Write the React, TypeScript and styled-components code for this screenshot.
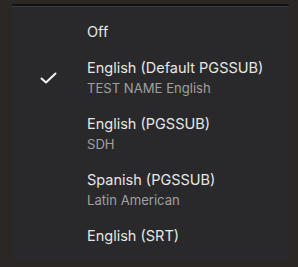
import React from "react";
import styled, { createGlobalStyle } from "styled-components";

const Global = createGlobalStyle`
  html, body { margin: 0; padding: 0; background: #2a2724; }
  body { font-family: Inter, "Noto Sans", sans-serif; -webkit-font-smoothing: antialiased; }
`;

const Page = styled.div`
  width: 298px;
  height: 267px;
  padding: 4px 9px 0 12px;
  box-sizing: border-box;
`;

const Panel = styled.div`
  background: #29292b;
  height: 257px;
  border-top: 2px solid #121212;
  box-shadow: inset 0 1px 0 #3c3c3e;
  border-top-right-radius: 3px;
  padding-top: 8px;
  box-sizing: border-box;
  display: flex;
  flex-direction: column;
`;

const Row = styled.div`
  display: grid;
  grid-template-columns: 75px 1fr;
  align-items: center;
  padding: 8px 0;
`;

const CheckCell = styled.div`
  display: flex;
  align-items: center;
  padding-left: 28px;
  height: 100%;
`;

const Texts = styled.div`
  display: flex;
  flex-direction: column;
`;

const Title = styled.div`
  font-size: 14.5px;
  line-height: 20px;
  font-weight: 400;
  color: #e6e6e6;
  white-space: nowrap;
`;

const Sub = styled.div`
  font-size: 13.1px;
  line-height: 20px;
  font-weight: 400;
  color: #a0a0a0;
  white-space: nowrap;
`;

const Check = () => (
  <svg width="17" height="12" viewBox="0 0 17 12" fill="none">
    <path d="M1.5 6.5 L6 10.5 L15.5 1.5" stroke="#f2f2f2" strokeWidth="2" strokeLinecap="round" strokeLinejoin="round" />
  </svg>
);

const items = [
  { title: "Off" },
  { title: "English (Default PGSSUB)", sub: "TEST NAME English", checked: true },
  { title: "English (PGSSUB)", sub: "SDH" },
  { title: "Spanish (PGSSUB)", sub: "Latin American" },
  { title: "English (SRT)" },
];

export default function App() {
  return (
    <>
      <Global />
      <Page>
        <Panel>
          {items.map((it) => (
            <Row key={it.title}>
              <CheckCell>{it.checked ? <Check /> : null}</CheckCell>
              <Texts>
                <Title>{it.title}</Title>
                {it.sub ? <Sub>{it.sub}</Sub> : null}
              </Texts>
            </Row>
          ))}
        </Panel>
      </Page>
    </>
  );
}
